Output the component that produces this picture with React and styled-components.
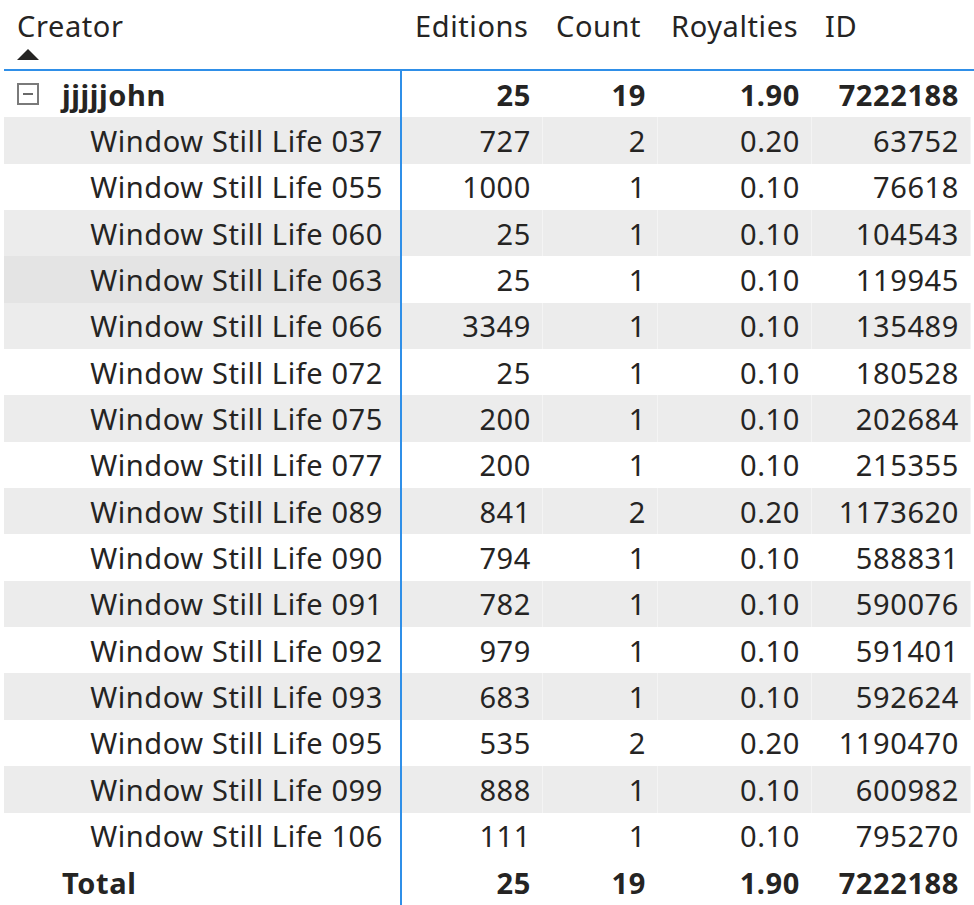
import React from "react";
import styled, { createGlobalStyle } from "styled-components";

const GlobalStyle = createGlobalStyle`
  body {
    margin: 0;
    background: #ffffff;
    font-family: "Noto Sans", "Open Sans", sans-serif;
    color: #252423;
  }
`;

const BLUE = "#2f8fe8";
const COLS = "398px 141px 115px 154px 159px";

const Wrapper = styled.div`
  width: 974px;
  height: 905px;
  overflow: hidden;
  padding-left: 4px;
  box-sizing: border-box;
  letter-spacing: 0.6px;
`;

const HeaderRow = styled.div`
  display: grid;
  grid-template-columns: ${COLS};
  height: 69px;
  border-bottom: 2px solid ${BLUE};
`;

const HeaderCell = styled.div`
  position: relative;
  padding: 7px 0 0 13px;
  font-size: 29px;
  line-height: 38px;
  white-space: nowrap;
`;

const SortArrow = styled.span`
  position: absolute;
  left: 13px;
  top: 49px;
  width: 0;
  height: 0;
  border-left: 11px solid transparent;
  border-right: 11px solid transparent;
  border-bottom: 11px solid #252423;
`;

const Row = styled.div`
  display: grid;
  grid-template-columns: ${COLS};
  height: 46.35px;
  font-size: 29px;
  font-weight: ${(p) => (p.$bold ? 700 : 400)};
`;

const Cell = styled.div`
  display: flex;
  align-items: center;
  justify-content: flex-end;
  padding-right: 12px;
  white-space: nowrap;
  background: ${(p) => (p.$striped ? "#ececec" : "#ffffff")};
  box-shadow: ${(p) => (p.$striped ? "inset -1px 0 0 #f4f4f4" : "none")};
`;

const CreatorCell = styled(Cell)`
  justify-content: ${(p) => (p.$left ? "flex-start" : "flex-end")};
  padding-right: 17px;
  padding-left: ${(p) => p.$indent || 0}px;
  border-right: 2px solid ${BLUE};
  box-shadow: none;
  background: ${(p) =>
    p.$hover ? "#e4e4e4" : p.$striped ? "#ececec" : "#ffffff"};
`;

const CollapseBox = styled.span`
  width: 18px;
  height: 18px;
  border: 2px solid #7a7a7a;
  display: inline-flex;
  align-items: center;
  justify-content: center;
  margin-right: 23px;
  &::after {
    content: "";
    width: 10px;
    height: 2px;
    background: #6a6a6a;
  }
`;

const items = [
  ["Window Still Life 037", 727, 2, "0.20", 63752],
  ["Window Still Life 055", 1000, 1, "0.10", 76618],
  ["Window Still Life 060", 25, 1, "0.10", 104543],
  ["Window Still Life 063", 25, 1, "0.10", 119945],
  ["Window Still Life 066", 3349, 1, "0.10", 135489],
  ["Window Still Life 072", 25, 1, "0.10", 180528],
  ["Window Still Life 075", 200, 1, "0.10", 202684],
  ["Window Still Life 077", 200, 1, "0.10", 215355],
  ["Window Still Life 089", 841, 2, "0.20", 1173620],
  ["Window Still Life 090", 794, 1, "0.10", 588831],
  ["Window Still Life 091", 782, 1, "0.10", 590076],
  ["Window Still Life 092", 979, 1, "0.10", 591401],
  ["Window Still Life 093", 683, 1, "0.10", 592624],
  ["Window Still Life 095", 535, 2, "0.20", 1190470],
  ["Window Still Life 099", 888, 1, "0.10", 600982],
  ["Window Still Life 106", 111, 1, "0.10", 795270],
];

const totals = [25, 19, "1.90", 7222188];

export default function App() {
  return (
    <Wrapper>
      <GlobalStyle />
      <HeaderRow>
        <HeaderCell>
          Creator
          <SortArrow />
        </HeaderCell>
        <HeaderCell>Editions</HeaderCell>
        <HeaderCell>Count</HeaderCell>
        <HeaderCell>Royalties</HeaderCell>
        <HeaderCell>ID</HeaderCell>
      </HeaderRow>

      <Row $bold>
        <CreatorCell $left $indent={13}>
          <CollapseBox />
          jjjjjohn
        </CreatorCell>
        {totals.map((v, i) => (
          <Cell key={i}>{v}</Cell>
        ))}
      </Row>

      {items.map(([name, ...vals], idx) => {
        const striped = idx % 2 === 0;
        const hover = idx === 3;
        return (
          <Row key={name}>
            <CreatorCell $striped={striped} $hover={hover}>
              {name}
            </CreatorCell>
            {vals.map((v, i) => (
              <Cell key={i} $striped={striped}>
                {v}
              </Cell>
            ))}
          </Row>
        );
      })}

      <Row $bold>
        <CreatorCell $left $indent={58}>
          Total
        </CreatorCell>
        {totals.map((v, i) => (
          <Cell key={i}>{v}</Cell>
        ))}
      </Row>
    </Wrapper>
  );
}
